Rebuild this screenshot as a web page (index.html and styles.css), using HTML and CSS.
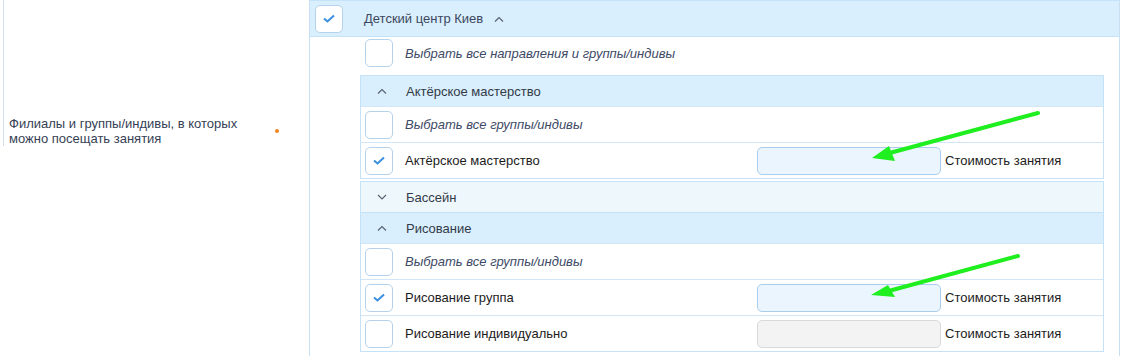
FILE: index.html
```html
<!DOCTYPE html>
<html lang="ru">
<head>
    <meta charset="UTF-8">
    <title>Филиалы и группы</title>
    <link rel="stylesheet" href="styles.css">
</head>
<body>
    <div class="field">
        <div class="field-label">
            <span class="label-text">Филиалы и группы/индивы, в которых можно посещать занятия</span>
            <span class="required-dot"></span>
        </div>
        <div class="field-value">
            <div class="branch-head">
                <span class="checkbox checked">
                    <svg viewBox="0 0 12 9" width="12" height="9"><path d="M1 4.5 L4.5 7.5 L11 1.5" /></svg>
                </span>
                <span class="branch-title">Детский центр Киев</span>
                <svg class="chevron" viewBox="0 0 10 6" width="10" height="6"><path d="M1 5.5 L5 1.5 L9 5.5" /></svg>
            </div>
            <div class="branch-body">
                <div class="select-all top">
                    <span class="checkbox"></span>
                    <span class="select-text">Выбрать все направления и группы/индивы</span>
                </div>

                <div class="group open">
                    <div class="group-head">
                        <svg class="chevron" viewBox="0 0 10 6" width="10" height="6"><path d="M1 5.5 L5 1.5 L9 5.5" /></svg>
                        <span>Актёрское мастерство</span>
                    </div>
                    <div class="row">
                        <span class="checkbox"></span>
                        <span class="select-text">Выбрать все группы/индивы</span>
                    </div>
                    <div class="row">
                        <span class="checkbox checked">
                            <svg viewBox="0 0 12 9" width="12" height="9"><path d="M1 4.5 L4.5 7.5 L11 1.5" /></svg>
                        </span>
                        <span class="row-name">Актёрское мастерство</span>
                        <input class="price" type="text">
                        <span class="price-label">Стоимость занятия</span>
                    </div>
                </div>

                <div class="group collapsed">
                    <div class="group-head">
                        <svg class="chevron" viewBox="0 0 10 6" width="10" height="6"><path d="M1 1 L5 5 L9 1" /></svg>
                        <span>Бассейн</span>
                    </div>
                </div>

                <div class="group open">
                    <div class="group-head">
                        <svg class="chevron" viewBox="0 0 10 6" width="10" height="6"><path d="M1 5.5 L5 1.5 L9 5.5" /></svg>
                        <span>Рисование</span>
                    </div>
                    <div class="row">
                        <span class="checkbox"></span>
                        <span class="select-text">Выбрать все группы/индивы</span>
                    </div>
                    <div class="row">
                        <span class="checkbox checked">
                            <svg viewBox="0 0 12 9" width="12" height="9"><path d="M1 4.5 L4.5 7.5 L11 1.5" /></svg>
                        </span>
                        <span class="row-name">Рисование группа</span>
                        <input class="price" type="text">
                        <span class="price-label">Стоимость занятия</span>
                    </div>
                    <div class="row">
                        <span class="checkbox"></span>
                        <span class="row-name">Рисование индивидуально</span>
                        <input class="price" type="text" disabled>
                        <span class="price-label">Стоимость занятия</span>
                    </div>
                </div>
            </div>
        </div>
    </div>

    <!-- annotation arrows -->
    <svg class="arrows" viewBox="0 0 1124 356" width="1124" height="356">
        <line x1="1038" y1="113" x2="886" y2="154" />
        <polygon points="872,158 889,146 895,161" />
        <line x1="1018" y1="256" x2="885" y2="292" />
        <polygon points="871,295 888,285 895,297" />
    </svg>
</body>
</html>
```

FILE: styles.css
```css
body {
    margin: 0;
    font-family: "Liberation Sans", Arial, sans-serif;
    font-size: 13px;
    color: #222;
    background: #fff;
}

.field {
    display: flex;
    margin-left: 3px;
    width: 1117px;
    min-height: 356px;
}

.field-label {
    box-sizing: border-box;
    width: 306px;
    border-left: 1px solid #cfe0f0;
    padding: 116px 0 0 5px;
    display: flex;
    align-items: center;
    align-self: flex-start;
}

.label-text {
    width: 252px;
    line-height: 15px;
    color: #363f55;
}

.required-dot {
    width: 4px;
    height: 4px;
    border-radius: 50%;
    background: #f5851f;
    margin-left: 14px;
}

.field-value {
    flex: 1;
    border-left: 1px solid #c8e0f4;
    border-right: 1px solid #c8e0f4;
}

.branch-head {
    display: flex;
    align-items: center;
    padding-left: 5px;
    background: #d9effd;
    border-top: 1px solid #c4e2f8;
    border-bottom: 1px solid #c4e2f8;
    box-sizing: border-box;
    height: 37px;
}

.branch-title {
    margin-left: 21px;
    color: #3d4760;
}

.branch-head .chevron {
    margin-left: 11px;
}

.chevron path {
    fill: none;
    stroke: #5b6372;
    stroke-width: 1.2;
}

.checkbox {
    box-sizing: border-box;
    width: 28px;
    height: 28px;
    flex: none;
    border: 1px solid #b5d2ec;
    border-radius: 5px;
    background: #fff;
    display: flex;
    align-items: center;
    justify-content: center;
}

.checkbox svg path {
    fill: none;
    stroke: #3a8fe2;
    stroke-width: 2;
}

.branch-body {
    padding-left: 50px;
    margin-right: 15px;
}

.select-all {
    display: flex;
    align-items: center;
    padding: 2px 5px 0;
    height: 28px;
    margin-bottom: 8px;
}

.select-text {
    margin-left: 12px;
    font-style: italic;
    color: #3d4a66;
}

.group {
    border: 1px solid #c4e2f8;
}

.group.open + .group {
    margin-top: 2px;
}

.group.collapsed + .group {
    margin-top: -1px;
}

.group-head {
    display: flex;
    align-items: center;
    height: 30px;
    padding-left: 16px;
    background: #d9effd;
    color: #333a48;
}

.collapsed .group-head {
    background: #eef7fc;
}

.group-head span {
    margin-left: 19px;
}

.row {
    display: flex;
    align-items: center;
    height: 35px;
    padding-left: 4px;
    border-top: 1px solid #d3e6f5;
}

.row-name {
    margin-left: 12px;
    flex: 1;
    color: #1c1c1c;
}

.price {
    box-sizing: border-box;
    width: 184px;
    height: 28px;
    margin: 0;
    border: 1px solid #a9cdea;
    border-radius: 5px;
    background: #eaf5fe;
    font: inherit;
}

.price:disabled {
    border-color: #d9d9d9;
    background: #f3f3f3;
}

.price-label {
    width: 162px;
    padding-left: 4px;
    box-sizing: border-box;
    color: #1c1c1c;
}

.arrows {
    position: absolute;
    left: 0;
    top: 0;
    pointer-events: none;
}

.arrows line {
    stroke: #1fee1f;
    stroke-width: 4;
    stroke-linecap: round;
}

.arrows polygon {
    fill: #1fee1f;
}
```
